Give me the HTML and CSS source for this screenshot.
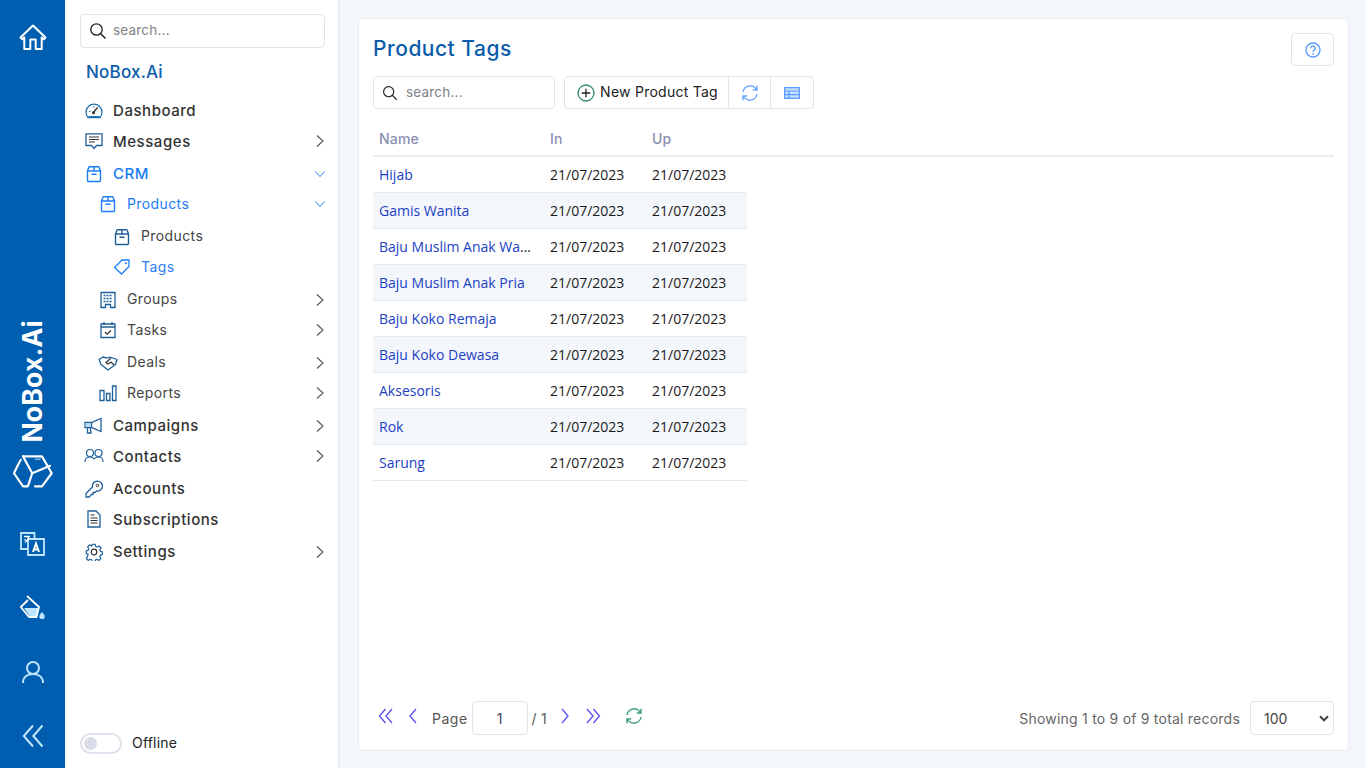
FILE: index.html
```html
<!DOCTYPE html>
<html lang="en">
<head>
<meta charset="utf-8">
<title>Product Tags</title>
<link rel="stylesheet" href="styles.css">
</head>
<body>
<svg class="defs" width="0" height="0" aria-hidden="true">
  <symbol id="right" viewBox="0 0 12 14"><path d="M3 1.500 9 7l-6 5.500" fill="none" stroke="currentColor" stroke-width="1.100"/></symbol>
  <symbol id="down" viewBox="0 0 14 12"><path d="M1.500 3 7 9l5.500-6" fill="none" stroke="currentColor" stroke-width="1.100"/></symbol>
  <symbol id="box" viewBox="0 0 18 18"><path d="M2.500 6h13v9.500a1 1 0 0 1-1 1h-11a1 1 0 0 1-1-1zM2.500 6l1.300-3.500a1 1 0 0 1 1-.7h8.400a1 1 0 0 1 1 .7L15.500 6M9 1.800V6M6.500 9.300h5" fill="none" stroke="currentColor" stroke-width="1.400"/></symbol>
  <symbol id="sync" viewBox="0 0 18 18"><path d="M2 8a7.200 7.200 0 0 1 12.600-3.600L16 6M16 1.800V6h-4.200M16 10a7.200 7.200 0 0 1-12.600 3.600L2 12M2 16.200V12h4.200" fill="none" stroke="currentColor" stroke-width="1.400"/></symbol>
  <symbol id="search" viewBox="0 0 18 18"><circle cx="7.500" cy="7.500" r="5.700" fill="none" stroke="currentColor" stroke-width="1.300"/><path d="m11.700 11.700 4.800 4.800" stroke="currentColor" stroke-width="1.500"/></symbol>
  <symbol id="dbl" viewBox="0 0 16 16"><path d="M7.500 1 1.500 8l6 7M14 1 8 8l6 7" fill="none" stroke="currentColor" stroke-width="1.300"/></symbol>
</svg>
<div class="app">
  <nav class="rail">
    <svg class="rail-home" viewBox="0 0 28 26"><path d="M1.500 13.500 14 1.500l12.500 12-1.800 1.800-2-1.900V25h-6V15.500h-5.400V25h-6V13.400l-2 1.900z" fill="none" stroke="#fff" stroke-width="2" stroke-linejoin="round"/></svg>
    <div class="rail-space"></div>
    <div class="rail-brand">NoBox.Ai</div>
    <svg class="rail-logo" viewBox="-1 0 41 33"><g fill="none" stroke="#fff" stroke-width="2.200" stroke-linejoin="round" stroke-linecap="round"><path d="M9.300 1h19.400L38.700 18.300 28.700 31.700H21.500"/><path d="M9.300 1 18.700 18.300 37 10.700M18.700 18.300 14.500 31"/><path d="M7 4.500 4.700 8.500 0 18.300 9.300 31.700H14"/></g><path d="M22 4h5" stroke="#fff" stroke-width="1.500" stroke-dasharray="1 1"/></svg>
    <svg class="rail-ico lang" viewBox="0 0 25 24"><path d="M1 1h13.500v16H1z" fill="none" stroke="#bfe6ff" stroke-width="1.800"/><path d="M8 7h16v16H8z" fill="#005eb0" stroke="#bfe6ff" stroke-width="1.800"/><path d="M4 4.500h6M8.500 4.500c0 2.500-1 4.500-3.500 6M4.500 7.500c1 1 1.800 1.500 3 2" fill="none" stroke="#fff" stroke-width="1.300"/><path d="m13 20 3-8.500 3 8.500M14.200 17.500h3.800" fill="none" stroke="#fff" stroke-width="2"/></svg>
    <svg class="rail-ico paint" viewBox="0 0 26 26"><path d="M4 13h14.500l-2 8H9.500z" fill="#bfe6ff"/><path d="M7 1l12 11-2.500 10H9L.8 12 8 5" fill="none" stroke="#fff" stroke-width="1.800" stroke-linejoin="round"/><path d="M22 17c1.300 1.700 2.700 2.900 2.700 4.400a2.700 2.700 0 0 1-5.400 0c0-1.500 1.400-2.700 2.700-4.400z" fill="#bfe6ff"/></svg>
    <svg class="rail-ico user" viewBox="0 0 24 24"><circle cx="12" cy="8" r="6" fill="none" stroke="#bfe6ff" stroke-width="2"/><path d="M2 23c0-6 4.500-9 10-9s10 3 10 9" fill="none" stroke="#bfe6ff" stroke-width="2"/></svg>
    <svg class="rail-ico collapse" viewBox="0 0 22 24"><path d="M11 1.500 1.800 12 11 22.500M20.500 1.500 11.300 12l9.200 10.500" fill="none" stroke="#bfe6ff" stroke-width="2"/></svg>
  </nav>

  <aside class="side">
    <label class="search side-search"><svg class="ico18"><use href="#search"/></svg><span>search...</span></label>
    <div class="brand">NoBox.Ai</div>
    <ul class="menu">
      <li class="item"><svg class="mi" viewBox="0 0 18 18"><path d="M3 15.500A8 8 0 1 1 15 15.500z" fill="none" stroke="#1f6fae" stroke-width="1.300"/><path d="M3.500 15h11" stroke="#1f6fae" stroke-width="2"/><path d="m8 11 4.500-5.500" stroke="#333" stroke-width="1.400"/><circle cx="8.500" cy="10.800" r="1.500" fill="#333"/><path d="M4 9.500h1.500M9 4v1.500" stroke="#1f6fae" stroke-width="1.100"/></svg><span class="tx">Dashboard</span></li>
      <li class="item"><svg class="mi" viewBox="0 0 18 18"><path d="M1 1.800h16v11.700h-5.500L9 16.500l-2.500-3H1z" fill="none" stroke="#1f5f99" stroke-width="1.300"/><path d="M4 5h10M4 7.500h10M4 10h6" stroke="#333" stroke-width="1.200"/></svg><span class="tx">Messages</span><svg class="ch"><use href="#right"/></svg></li>
      <li class="item active"><svg class="mi"><use href="#box"/></svg><span class="tx">CRM</span><svg class="ch"><use href="#down"/></svg></li>
      <li class="item sub active"><svg class="mi"><use href="#box"/></svg><span class="tx">Products</span><svg class="ch"><use href="#down"/></svg></li>
      <li class="item sub2"><svg class="mi dark"><use href="#box"/></svg><span class="tx">Products</span></li>
      <li class="item sub2 active"><svg class="mi" viewBox="0 0 18 18"><path d="M1.500 9.500 9 2h7v6.500L8.500 16z" fill="none" stroke="currentColor" stroke-width="1.300" stroke-linejoin="round"/><circle cx="12.800" cy="5.300" r="1" fill="currentColor"/></svg><span class="tx">Tags</span></li>
      <li class="item sub"><svg class="mi" viewBox="0 0 18 18"><path d="M2 1.500h14v15h-4.500v-3h-5v3H2z" fill="none" stroke="#1f5f99" stroke-width="1.300"/><path d="M4.500 4.500h9M4.500 7.500h9M4.500 10.500h9" stroke="#1f5f99" stroke-width="1.500" stroke-dasharray="2 1"/></svg><span class="tx">Groups</span><svg class="ch"><use href="#right"/></svg></li>
      <li class="item sub"><svg class="mi" viewBox="0 0 18 18"><path d="M2 3h14v13.500H2zM2 6h14M5 1v3M13 1v3" fill="none" stroke="#1f5f99" stroke-width="1.300"/><path d="m6 11 2.200 2.200L12 9.500" fill="none" stroke="#333" stroke-width="1.300"/></svg><span class="tx">Tasks</span><svg class="ch"><use href="#right"/></svg></li>
      <li class="item sub"><svg class="mi wide" viewBox="0 0 20 16"><path d="M1 4.500 5 2l4 1 3-1 7 2.500-1.500 5-7.500 5.500L3 9.500z" fill="none" stroke="#1f5f99" stroke-width="1.300" stroke-linejoin="round"/><path d="M13 3 8 7.500l2 1.500 3-2 3 3" fill="none" stroke="#333" stroke-width="1.200"/></svg><span class="tx">Deals</span><svg class="ch"><use href="#right"/></svg></li>
      <li class="item sub"><svg class="mi" viewBox="0 0 18 18"><path d="M1 6.500h4v10H1zM7.500 9.500h3.500v7H7.500zM13.500 2h3.500v14.500h-3.500z" fill="none" stroke="#1f5f99" stroke-width="1.300"/></svg><span class="tx">Reports</span><svg class="ch"><use href="#right"/></svg></li>
      <li class="item"><svg class="mi wide" viewBox="0 0 20 18"><path d="M1 5.500h6.500L17 1.500v13L7.500 10.500H1zM3.500 10.500v5.500h3.500l-.7-5.500M7.500 5.500v5" fill="none" stroke="#1f5f99" stroke-width="1.300"/><path d="M1.700 6.200h5.200v3.700H1.700z" fill="#bcdcf5"/></svg><span class="tx">Campaigns</span><svg class="ch"><use href="#right"/></svg></li>
      <li class="item"><svg class="mi wide" viewBox="0 0 20 16"><g fill="none" stroke="#1f5f99" stroke-width="1.200"><circle cx="6" cy="5" r="3.500"/><circle cx="14.500" cy="5" r="3.500"/><path d="M1 14c0-3.500 2-5 5-5 2 0 3 .5 4 2M10 11c1-1.500 2.500-2 4.500-2 3 0 4.500 1.500 4.500 5"/></g></svg><span class="tx">Contacts</span><svg class="ch"><use href="#right"/></svg></li>
      <li class="item"><svg class="mi" viewBox="0 0 18 18"><path d="M1 17v-3.500L7.500 7a5 5 0 1 1 4 4L10 12.500H8V14.500H6L4.500 17z" fill="none" stroke="#1f5f99" stroke-width="1.300" stroke-linejoin="round"/><circle cx="12.500" cy="5.500" r="1.300" fill="none" stroke="#333"/></svg><span class="tx">Accounts</span></li>
      <li class="item"><svg class="mi" viewBox="0 0 18 18"><path d="M3 1h8l4 4v12H3z" fill="none" stroke="#1f5f99" stroke-width="1.300"/><path d="M5.500 5h4M5.500 8h7M5.500 10.500h7M5.500 13h7" stroke="#333" stroke-width="1.200"/></svg><span class="tx">Subscriptions</span></li>
      <li class="item"><svg class="mi" viewBox="0 0 18 18"><path d="M7.500 1h3l.5 2.300 1.700.7 2-1.200 2 2.200-1.200 2 .6 1.500 2 .5v3l-2 .5-.7 1.700 1.200 2-2.100 2-2-1.200-1.700.7-.5 2h-3l-.5-2-1.700-.7-2 1.200-2-2 1.200-2L3 11.500 1 11V8l2-.5.7-1.700-1.200-2 2-2.100 2 1.200L7 2.300z" transform="translate(.3 .3) scale(.94)" fill="none" stroke="#1f5f99" stroke-width="1.300" stroke-linejoin="round"/><circle cx="9" cy="9" r="2.800" fill="none" stroke="#333" stroke-width="1.200"/></svg><span class="tx">Settings</span><svg class="ch"><use href="#right"/></svg></li>
    </ul>
    <div class="offline"><span class="switch"><span class="knob"></span></span><span class="off-l">Offline</span></div>
  </aside>

  <main class="main">
    <section class="card">
      <header class="head">
        <h1>Product Tags</h1>
        <button class="help"><svg viewBox="0 0 16 16"><circle cx="8" cy="8" r="7" fill="none" stroke="currentColor" stroke-width="1.400"/><path d="M5.800 6.200a2.200 2.200 0 1 1 3.400 1.900c-.8.500-1.200.8-1.200 1.700" fill="none" stroke="currentColor" stroke-width="1.400"/><circle cx="8" cy="11.800" r=".9" fill="currentColor"/></svg></button>
      </header>
      <div class="tools">
        <label class="search tool-search"><svg class="ico16"><use href="#search"/></svg><span>search...</span></label>
        <div class="group">
          <button class="g-btn new"><svg viewBox="0 0 18 18"><circle cx="9" cy="9" r="8" fill="none" stroke="#2e8b6a" stroke-width="1.300"/><path d="M9 4.800v8.400M4.800 9h8.400" stroke="#222" stroke-width="1.300"/></svg><span>New Product Tag</span></button>
          <button class="g-btn ic"><svg class="blue"><use href="#sync"/></svg></button>
          <button class="g-btn ic"><svg class="blue tbl" viewBox="0 0 16 12"><path d="M0 0h16v12H0z" fill="#c4ddff"/><path d="M.6.6h14.800v10.800H.6zM.6 4h14.800M.6 7.700h14.800M5 4v7.400" fill="none" stroke="#5b9dff" stroke-width="1.200"/></svg></button>
        </div>
      </div>
      <table class="table">
        <thead><tr><th>Name</th><th>In</th><th>Up</th></tr></thead>
        <tbody>
          <tr><td><a>Hijab</a></td><td>21/07/2023</td><td>21/07/2023</td></tr>
          <tr><td><a>Gamis Wanita</a></td><td>21/07/2023</td><td>21/07/2023</td></tr>
          <tr><td><a>Baju Muslim Anak Wanita</a></td><td>21/07/2023</td><td>21/07/2023</td></tr>
          <tr><td><a>Baju Muslim Anak Pria</a></td><td>21/07/2023</td><td>21/07/2023</td></tr>
          <tr><td><a>Baju Koko Remaja</a></td><td>21/07/2023</td><td>21/07/2023</td></tr>
          <tr><td><a>Baju Koko Dewasa</a></td><td>21/07/2023</td><td>21/07/2023</td></tr>
          <tr><td><a>Aksesoris</a></td><td>21/07/2023</td><td>21/07/2023</td></tr>
          <tr><td><a>Rok</a></td><td>21/07/2023</td><td>21/07/2023</td></tr>
          <tr><td><a>Sarung</a></td><td>21/07/2023</td><td>21/07/2023</td></tr>
        </tbody>
      </table>
      <footer class="foot">
        <div class="pager">
          <svg class="pg d1"><use href="#dbl"/></svg>
          <svg class="pg s1" viewBox="0 0 10 16"><path d="M8 1 2 8l6 7" fill="none" stroke="currentColor" stroke-width="1.300"/></svg>
          <span class="page-l">Page</span>
          <span class="page-in">1</span>
          <span class="page-t">/ 1</span>
          <svg class="pg s2" viewBox="0 0 10 16"><path d="m2 1 6 7-6 7" fill="none" stroke="currentColor" stroke-width="1.300"/></svg>
          <svg class="pg d2" viewBox="0 0 16 16"><path d="m2 1 6 7-6 7M8.500 1l6 7-6 7" fill="none" stroke="currentColor" stroke-width="1.300"/></svg>
          <svg class="pg-sync"><use href="#sync"/></svg>
        </div>
        <div class="summary">
          <span class="sum-t">Showing 1 to 9 of 9 total records</span>
          <span class="size">100<svg viewBox="0 0 10 7"><path d="M1 1.300 5 5.300l4-4" fill="none" stroke="#444" stroke-width="2"/></svg></span>
        </div>
      </footer>
    </section>
  </main>
</div>
</body>
</html>
```
FILE: styles.css
```css
* { box-sizing: border-box; }
html, body { margin: 0; height: 100%; }
body { font-family: Inter, "Liberation Sans", sans-serif; color: #333; background: #f3f6fa; overflow: hidden; }
.defs { position: absolute; }
.app { display: flex; height: 768px; }

.rail { width: 65px; flex: none; background: #005eb0; display: flex; flex-direction: column; align-items: center; padding: 24px 0 20px; }
.rail-home { width: 28px; height: 26px; }
.rail-space { flex: 1; }
.rail-brand { writing-mode: vertical-rl; transform: rotate(180deg); color: #fff; font-weight: 700; font-size: 26.500px; line-height: 31px; letter-spacing: .2px; }
.rail-logo { width: 40px; height: 35px; margin-top: 11px; }
.rail-ico { display: block; }
.lang { width: 25px; height: 24px; margin-top: 43px; }
.paint { width: 26px; height: 26px; margin-top: 39px; }
.user { width: 24px; height: 24px; margin-top: 39px; }
.collapse { width: 22px; height: 24px; margin-top: 40px; }

.side { width: 275px; flex: none; background: #fff; border-right: 2px solid #e9edf3; padding: 14px 13px 14px 15px; display: flex; flex-direction: column; }
.search { display: flex; align-items: center; background: #fff; border: 1px solid #e2e4e8; border-radius: 4px; color: #80838a; font-size: 13.500px; letter-spacing: .2px; }
.search span { padding-bottom: 2px; }
.side-search { height: 34px; padding-left: 8px; gap: 6px; }
.ico18 { width: 18px; height: 18px; color: #222; }
.brand { color: #0a5cab; font-size: 17px; font-weight: 500; letter-spacing: .2px; margin: 13px 0 0 6px; line-height: 22px; }
.menu { list-style: none; margin: 11.750px 0 0; padding: 0; flex: 1; }
.item { height: 31.500px; display: flex; align-items: center; font-size: 15px; font-weight: 500; letter-spacing: .55px; color: #333; padding-left: 5px; }
.item:nth-child(even) { padding-bottom: 1.500px; }
.item .mi { width: 18px; height: 18px; flex: none; margin-right: 10px; color: #1f5f99; }
.item .mi.wide { width: 20px; margin-left: -1px; margin-right: 9px; }
.item .tx { flex: 1; }
.item .ch { width: 12px; height: 14px; flex: none; margin-right: -1px; color: #555; }
.item.active { color: #1b7cf5; }
.item.active .mi, .item.active .ch { color: #1b7cf5; }
.item.sub { padding-left: 19px; font-size: 14px; font-weight: 400; letter-spacing: .4px; color: #444; }
.item.sub .tx { padding-bottom: 2px; }
.item.sub.active { color: #1b7cf5; }
.item.sub2 { padding-left: 33px; font-size: 14px; font-weight: 400; letter-spacing: .4px; color: #444; }
.item.sub2 .tx { padding-bottom: 2px; }
.item.sub2.active { color: #2f7cf5; }
.item.sub2.active .mi { color: #1b7cf5; }
.offline { display: flex; align-items: center; gap: 10px; font-size: 14px; letter-spacing: .2px; color: #222; height: 22px; }
.off-l { padding-bottom: 2px; }
.switch { width: 42px; height: 21px; border: 2px solid #dfe2ec; border-radius: 11px; display: flex; align-items: center; padding-left: 2px; }
.knob { width: 13px; height: 13px; border-radius: 50%; background: #dadde9; }

.main { flex: 1; padding: 18px 17px 17px 18px; min-width: 0; }
.card { position: relative; height: 733px; background: #fff; border: 1px solid #e9ebef; border-radius: 4px; padding: 17px 14px 15px; display: flex; flex-direction: column; }
.card::before { content: ""; position: absolute; left: 14px; right: 14px; top: 136px; height: 2px; background: #e9edf3; }
.head { display: flex; justify-content: space-between; align-items: flex-start; height: 40px; }
.head h1 { margin: 0; font-size: 21px; font-weight: 500; letter-spacing: .5px; color: #0a5cab; line-height: 26px; }
.help { width: 43px; height: 33px; margin-top: -3px; border: 1px solid #e2e4e8; border-radius: 4px; background: #fff; color: #5b9dff; padding: 0; display: flex; align-items: center; justify-content: center; }
.help svg { width: 16px; height: 16px; }
.tools { display: flex; gap: 9px; }
.tool-search { width: 182px; height: 33px; padding-left: 8px; gap: 8px; }
.ico16 { width: 16px; height: 16px; color: #222; }
.group { display: flex; border: 1px solid #e2e4e8; border-radius: 4px; height: 33px; width: 250px; }
.g-btn { border: 0; background: none; padding: 0; font: inherit; color: #222; display: flex; align-items: center; justify-content: center; border-left: 1px solid #e2e4e8; }
.g-btn:first-child { border-left: 0; }
.new { width: 163px; font-size: 14px; font-weight: 400; letter-spacing: .25px; gap: 5px; padding-left: 2px; }
.new span { padding-bottom: 2px; }
.new svg { width: 18px; height: 18px; }
.ic { width: 42px; }
.ic svg.blue { width: 18px; height: 18px; color: #6aa6ff; }
.ic svg.tbl { width: 16px; height: 12px; }

.table { border-collapse: collapse; margin-top: 14px; table-layout: fixed; width: 374px; }
.table th { text-align: left; font-size: 14px; font-weight: 500; letter-spacing: .2px; color: #8a8fb0; height: 33px; padding: 0 6px 2px; }
.table th:nth-child(1), .table td:nth-child(1) { width: 171px; }
.table th:nth-child(2), .table td:nth-child(2) { width: 102px; }
.table thead { border-bottom: 2px solid #e9edf3; }
.table td { font-family: "Open Sans", sans-serif; font-size: 14px; height: 36px; padding: 0 6px; border-bottom: 1px solid #e6eaef; color: #1a1a1a; white-space: nowrap; overflow: hidden; text-overflow: ellipsis; }
.table tr:nth-child(even) td { background: #f3f6fa; }
.table a { color: #1c3fc4; }

.foot { margin-top: auto; display: flex; justify-content: space-between; align-items: center; height: 34px; }
.pager { display: flex; align-items: center; color: #555; font-size: 14px; }
.pg { color: #5a4ff0; height: 16px; margin-bottom: 4px; }
.d1 { width: 16px; margin-left: 5px; }
.s1 { width: 10px; margin-left: 14px; }
.page-l { margin-left: 14px; letter-spacing: .5px; }
.page-in { width: 56px; height: 34px; margin-left: 4px; border: 1px solid #e2e4e8; border-radius: 4px; display: flex; align-items: center; justify-content: center; color: #446; }
.page-t { margin-left: 4px; letter-spacing: .2px; }
.s2 { width: 10px; margin-left: 13px; }
.d2 { width: 16px; margin-left: 15px; }
.pg-sync { width: 18px; height: 18px; margin: 0 0 4px 24px; color: #3a9d7a; }
.summary { display: flex; align-items: center; gap: 10px; font-size: 14px; color: #666; }
.sum-t { letter-spacing: .22px; }
.size { width: 84px; height: 34px; border: 1px solid #e2e4e8; border-radius: 4px; display: flex; align-items: center; justify-content: space-between; padding: 0 4px 0 13px; color: #444; }
.size svg { width: 10px; height: 7px; }
```
